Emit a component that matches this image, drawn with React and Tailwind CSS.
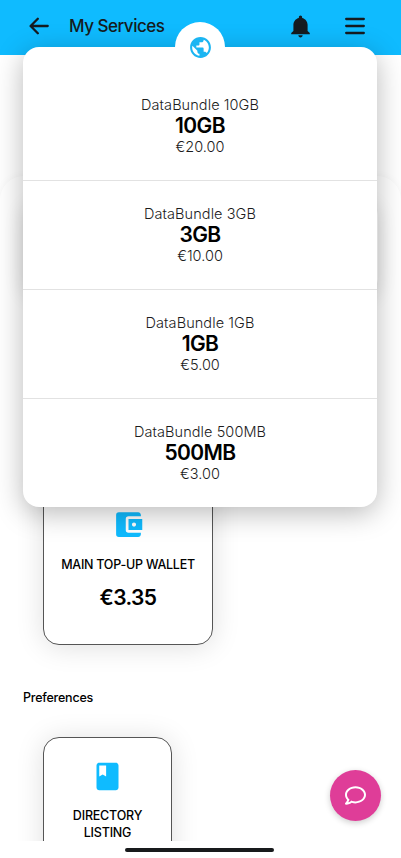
import { FaRegComment } from "react-icons/fa";
import { IoMdNotifications } from "react-icons/io";
import { MdAccountBalanceWallet, MdClass, MdPublic } from "react-icons/md";

const bundles = [
  { size: "10GB", price: "€20.00" },
  { size: "3GB", price: "€10.00" },
  { size: "1GB", price: "€5.00" },
  { size: "500MB", price: "€3.00" },
];

function Header() {
  return (
    <header className="flex h-[55px] shrink-0 items-center bg-[#0fbbff] pl-[29px] pr-9 pb-[3px] text-[#151b20]">
      <svg
        className="h-[18px] w-5"
        viewBox="0 0 20 18"
        fill="none"
        stroke="currentColor"
        strokeWidth="2.3"
        strokeLinecap="round"
        strokeLinejoin="round"
      >
        <path d="M8.8 1.7 1.6 9l7.2 7.3M2 9h16.7" />
      </svg>

      <h1 className="ml-5 grow pt-px text-[17px] font-medium tracking-[-0.48px]">
        My Services
      </h1>

      <IoMdNotifications className="mr-[31px] size-[27px]" />

      <svg
        className="h-[18px] w-5"
        viewBox="0 0 20 18"
        stroke="currentColor"
        strokeWidth="2.3"
        strokeLinecap="round"
      >
        <path d="M1.2 2h17.6M1.2 9h17.6M1.2 16h17.6" />
      </svg>
    </header>
  );
}

function BundleMenu() {
  return (
    <div className="absolute left-[23px] top-[47px] w-[354px] rounded-2xl bg-white shadow-[0_6px_28px_rgba(0,0,0,0.28)]">
      <div className="absolute left-1/2 top-[-25px] flex size-[50px] -translate-x-1/2 items-center justify-center rounded-full bg-white">
        <MdPublic className="size-[25px] text-[#1bb5f2]" />
      </div>

      <ul className="relative divide-y divide-[#e2e2e2] pt-[25px]">
        {bundles.map((bundle) => (
          <li
            key={bundle.size}
            className="flex h-[109px] flex-col items-center justify-center text-[#1c1c1c] last:h-[108px]"
          >
            <span className="text-[14.5px] leading-5 font-light tracking-[0.08px]">
              DataBundle {bundle.size}
            </span>
            <span className="pt-px pb-px text-[21px] leading-5 font-semibold tracking-[-0.6px] text-black">
              {bundle.size}
            </span>
            <span className="text-[14.5px] leading-5 font-light">
              {bundle.price}
            </span>
          </li>
        ))}
      </ul>
    </div>
  );
}

function App() {
  return (
    <div
      className="relative flex h-[858px] w-[401px] flex-col overflow-hidden bg-white text-black"
      style={{ fontFamily: 'Inter, "Liberation Sans", sans-serif' }}
    >
      <Header />

      <main className="h-[786px] shrink-0 overflow-hidden pt-[121px]">
        <div className="rounded-3xl bg-white pt-[24px] shadow-[0_0_8px_rgba(0,0,0,0.04)]">

          <div className="mx-[23px] h-[94px] rounded-2xl bg-white shadow-[0_4px_20px_rgba(0,0,0,0.12)]" />

          <div className="ml-[43px] mt-[170px] flex h-[181px] w-[170px] flex-col items-center rounded-2xl border border-[#555] bg-white pt-[43px] shadow-[0_2px_28px_rgba(0,0,0,0.13)]">
            <MdAccountBalanceWallet className="size-[33px] text-[#0fbbff]" />
            <p className="mt-[14px] text-[12.5px] leading-5 font-medium tracking-[-0.25px] whitespace-nowrap">
              MAIN TOP-UP WALLET
            </p>
            <p className="mt-[9px] text-[21px] leading-7 font-semibold tracking-[-0.6px]">
              €3.35
            </p>
          </div>

          <h2 className="ml-[23px] mt-[43px] text-[12.5px] leading-5 font-medium tracking-[-0.22px]">
            Preferences
          </h2>

          <div className="ml-[43px] mt-[29px] flex h-[150px] w-[129px] flex-col items-center rounded-2xl border border-[#555] bg-white pt-[22px] shadow-[0_2px_28px_rgba(0,0,0,0.13)]">
            <MdClass className="size-[33px] text-[#0fbbff]" />
            <p className="mt-[15px] text-center text-[12.5px] leading-[16.5px] font-medium tracking-[-0.2px]">
              DIRECTORY
              <br />
              LISTING
            </p>
          </div>

        </div>
      </main>

      <footer className="flex grow justify-center bg-white pt-[7px] pr-[3px]">
        <div className="h-1 w-[149px] rounded-full bg-[#181a1c]" />
      </footer>

      <BundleMenu />

      <button className="absolute right-5 bottom-[37px] flex size-[51px] items-center justify-center rounded-full bg-[#df3d98] text-white shadow-[0_2px_6px_rgba(0,0,0,0.2)]">
        <FaRegComment className="size-[21px]" />
      </button>
    </div>
  );
}

export default App;
